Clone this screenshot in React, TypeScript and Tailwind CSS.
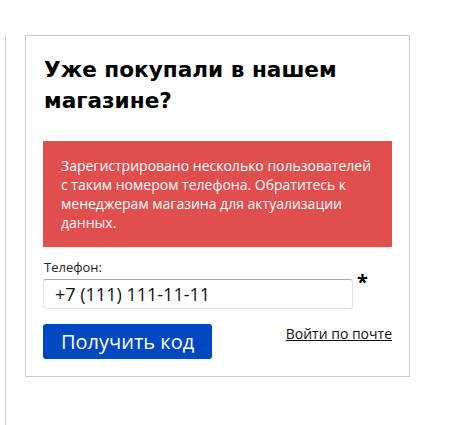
export default function App() {
  return (
    <div className="flex min-h-[425px] bg-white pt-[35px] font-['Open_Sans',sans-serif] text-black">
      {/* edge of the neighbouring column */}
      <div className="w-[6px] shrink-0 border-r border-[#cccccc]" />

      {/* Login card */}
      <div className="ml-[19px] w-[385px] self-start border border-[#cccccc] px-[17px] pt-[18px] pb-[17px]">
        <h2 className="pl-px font-['DejaVu_Sans',sans-serif] text-[21.6px] font-bold leading-[31px] text-black">
          Уже покупали в нашем магазине?
        </h2>

        <div className="mt-[25px] bg-[#e14e4e] px-[18px] py-[15px] text-[14px] leading-[19px] text-white">
          Зарегистрировано несколько пользователей с таким номером телефона. Обратитесь к менеджерам магазина для
          актуализации данных.
        </div>

        <label className="mt-[11px] block pl-px text-[13px] leading-[18px] text-[#222]">Телефон:</label>
        <div className="mt-[3px] flex items-start">
          <input
            type="text"
            defaultValue="+7 (111) 111-11-11"
            className="h-[30px] w-[310px] rounded-[3px] border border-[#dfe4ea] border-t-[#a9a9a9] bg-white px-[11px] text-[18px] text-[#111] outline-none"
          />
          <span className="-mt-[9px] ml-[4px] text-[20px] font-bold leading-[24px]">*</span>
        </div>

        <div className="mt-[15px] flex items-start justify-between">
          <button className="h-[35px] rounded-[3px] bg-[#0047c2] px-[18px] text-[20px] leading-[35px] text-white">
            Получить код
          </button>
          <a href="#" className="text-[14px] leading-[20px] text-[#111] underline">
            Войти по почте
          </a>
        </div>
      </div>
    </div>
  );
}
